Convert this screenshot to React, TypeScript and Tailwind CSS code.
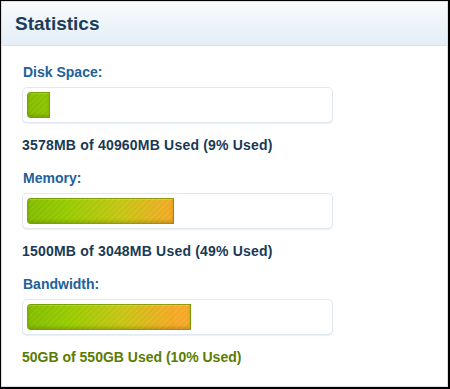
const stats = [
  { label: 'Disk Space:', usage: '3578MB of 40960MB Used (9% Used)', width: 23, tone: 'tracking-[0.2px] text-[#183a55]' },
  { label: 'Memory:', usage: '1500MB of 3048MB Used (49% Used)', width: 147, tone: 'tracking-[0.2px] text-[#183a55]' },
  { label: 'Bandwidth:', usage: '50GB of 550GB Used (10% Used)', width: 164, tone: 'text-[#5a7c00]' },
];

const UsageBar = ({ width }: { width: number }) => (
  <div className="h-[36px] w-[311px] rounded-[5px] border border-[#e1e9f0] bg-white p-[4px] shadow-[0_1px_1px_rgba(210,222,232,0.5)]">
    <div
      className="h-full rounded-l-[4px] border border-[#6e9200]/70 bg-[repeating-linear-gradient(135deg,rgba(255,255,255,0.04)_0px,rgba(255,255,255,0.04)_2px,rgba(0,0,0,0.015)_2px,rgba(0,0,0,0.015)_4px),linear-gradient(to_right,#84be00_0px,#98cc00_40px,#c8c614_95px,#f1ad24_140px,#f6a821_146px,#f7ab28_146px)] shadow-[inset_0_-2px_3px_rgba(60,60,0,0.22),inset_0_1px_0_rgba(255,255,255,0.2)]"
      style={{ width }}
    />
  </div>
);

export default function App() {
  return (
    <div className="h-[389px] w-[450px] border-b-2 border-l border-r-2 border-t border-black bg-white font-['Liberation_Sans',Arial,sans-serif]">
      <div className="h-full border border-[#d6dfe7] bg-white">
        <div className="flex h-[44px] items-center border-b border-[#d7e3ec] bg-[linear-gradient(to_bottom,#f8fbfd,#e4eef6)] pl-[13px]">
          <h2 className="text-[19px] font-bold leading-none text-[#1b3d5a]">Statistics</h2>
        </div>

        <div className="pl-[20px] pt-[18px]">
          {stats.map((stat) => (
            <div key={stat.label} className="mb-[17px]">
              <div className="mb-[7px] pl-[1px] text-[14px] font-bold leading-[16px] text-[#20619a]">{stat.label}</div>
              <UsageBar width={stat.width} />
              <div className={`mt-[14px] text-[14px] font-bold leading-[16px] ${stat.tone}`}>{stat.usage}</div>
            </div>
          ))}
        </div>
      </div>
    </div>
  );
}
